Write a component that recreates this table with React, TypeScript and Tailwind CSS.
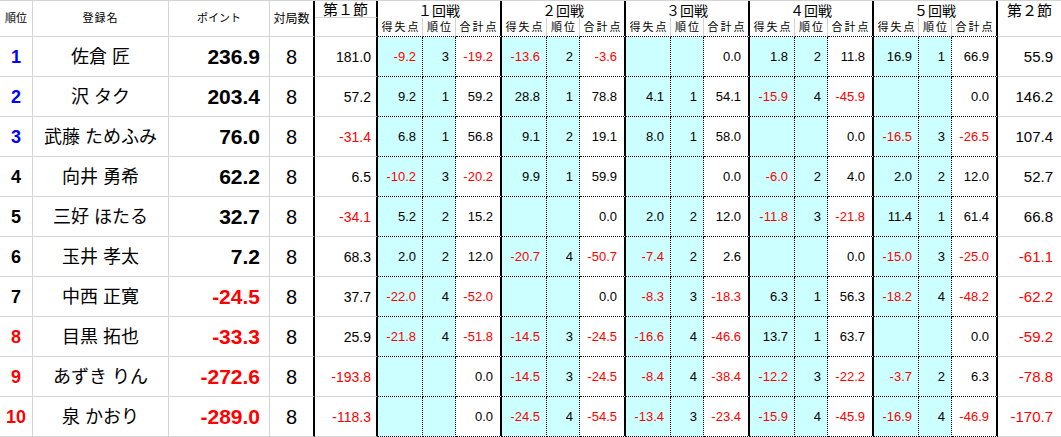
import React from "react";

type Round = [string, string, string];
type Row = {
  rank: number;
  name: string;
  pts: string;
  s1: string;
  rounds: Round[];
  s2: string;
};

const rows: Row[] = [
  { rank: 1, name: "佐倉 匠", pts: "236.9", s1: "181.0", rounds: [["-9.2", "3", "-19.2"], ["-13.6", "2", "-3.6"], ["", "", "0.0"], ["1.8", "2", "11.8"], ["16.9", "1", "66.9"]], s2: "55.9" },
  { rank: 2, name: "沢 タク", pts: "203.4", s1: "57.2", rounds: [["9.2", "1", "59.2"], ["28.8", "1", "78.8"], ["4.1", "1", "54.1"], ["-15.9", "4", "-45.9"], ["", "", "0.0"]], s2: "146.2" },
  { rank: 3, name: "武藤 ためふみ", pts: "76.0", s1: "-31.4", rounds: [["6.8", "1", "56.8"], ["9.1", "2", "19.1"], ["8.0", "1", "58.0"], ["", "", "0.0"], ["-16.5", "3", "-26.5"]], s2: "107.4" },
  { rank: 4, name: "向井 勇希", pts: "62.2", s1: "6.5", rounds: [["-10.2", "3", "-20.2"], ["9.9", "1", "59.9"], ["", "", "0.0"], ["-6.0", "2", "4.0"], ["2.0", "2", "12.0"]], s2: "52.7" },
  { rank: 5, name: "三好 ほたる", pts: "32.7", s1: "-34.1", rounds: [["5.2", "2", "15.2"], ["", "", "0.0"], ["2.0", "2", "12.0"], ["-11.8", "3", "-21.8"], ["11.4", "1", "61.4"]], s2: "66.8" },
  { rank: 6, name: "玉井 孝太", pts: "7.2", s1: "68.3", rounds: [["2.0", "2", "12.0"], ["-20.7", "4", "-50.7"], ["-7.4", "2", "2.6"], ["", "", "0.0"], ["-15.0", "3", "-25.0"]], s2: "-61.1" },
  { rank: 7, name: "中西 正寛", pts: "-24.5", s1: "37.7", rounds: [["-22.0", "4", "-52.0"], ["", "", "0.0"], ["-8.3", "3", "-18.3"], ["6.3", "1", "56.3"], ["-18.2", "4", "-48.2"]], s2: "-62.2" },
  { rank: 8, name: "目黒 拓也", pts: "-33.3", s1: "25.9", rounds: [["-21.8", "4", "-51.8"], ["-14.5", "3", "-24.5"], ["-16.6", "4", "-46.6"], ["13.7", "1", "63.7"], ["", "", "0.0"]], s2: "-59.2" },
  { rank: 9, name: "あずき りん", pts: "-272.6", s1: "-193.8", rounds: [["", "", "0.0"], ["-14.5", "3", "-24.5"], ["-8.4", "4", "-38.4"], ["-12.2", "3", "-22.2"], ["-3.7", "2", "6.3"]], s2: "-78.8" },
  { rank: 10, name: "泉 かおり", pts: "-289.0", s1: "-118.3", rounds: [["", "", "0.0"], ["-24.5", "4", "-54.5"], ["-13.4", "3", "-23.4"], ["-15.9", "4", "-45.9"], ["-16.9", "4", "-46.9"]], s2: "-170.7" },
];

const roundNames = ["１回戦", "２回戦", "３回戦", "４回戦", "５回戦"];

const neg = (v: string) => v.startsWith("-");

function rankColor(r: number) {
  if (r <= 3) return "text-[#0000ff]";
  if (r >= 8) return "text-[#ff0000]";
  return "text-black";
}

export default function App() {
  return (
    <div className="w-[1061px] h-[437px] overflow-hidden bg-white font-['Liberation_Sans','Noto_Sans_CJK_JP',sans-serif] text-black">
      <div className="grid grid-cols-[33px_136px_101px_45px_63px_repeat(5,45px_33px_46px)_63px] grid-rows-[17px_19px_repeat(10,40px)] border-t border-t-[#d4d4d4] leading-none">
        {/* Header row 1 */}
        <div className="row-span-2 flex items-center justify-center border-r border-b border-[#d4d4d4] text-[11px]">順位</div>
        <div className="row-span-2 flex items-center justify-center border-r border-b border-[#d4d4d4] text-[11px] tracking-[1px]">登録名</div>
        <div className="row-span-2 flex items-center justify-center border-r border-b border-[#d4d4d4] text-[11px]">ポイント</div>
        <div className="row-span-2 flex items-center justify-center border-b border-b-[#d4d4d4] border-r-2 border-r-black text-[12px]">対局数</div>
        <div className="flex items-center justify-center border-b border-b-[#d4d4d4] border-r-2 border-r-black text-[15px] pt-[1px]">第１節</div>
        {roundNames.map((n) => (
          <div key={n} className="col-span-3 flex items-center justify-center border-r-2 border-r-black text-[14px] pt-[2px]">{n}</div>
        ))}
        <div className="flex items-center justify-center text-[15px] pt-[2px]">第２節</div>

        {/* Header row 2 */}
        <div className="border-b border-b-[#d4d4d4] border-r-2 border-r-black"></div>
        {roundNames.map((n) => (
          <React.Fragment key={n + "s"}>
            <div className="flex items-center justify-center border-r border-r-[#d4d4d4] border-b border-b-black [border-bottom-style:dotted] text-[11px] tracking-[2px] pl-[2px]">得失点</div>
            <div className="flex items-center justify-center border-r border-r-[#d4d4d4] border-b border-b-black [border-bottom-style:dotted] text-[11px] tracking-[2px] pl-[2px]">順位</div>
            <div className="flex items-center justify-center border-r-2 border-r-black border-b border-b-black [border-bottom-style:dotted] text-[11px] tracking-[2px] pl-[2px]">合計点</div>
          </React.Fragment>
        ))}
        <div className="border-b border-b-[#d4d4d4]"></div>

        {/* Data rows */}
        {rows.map((r) => (
          <React.Fragment key={r.rank}>
            <div className={`flex items-center justify-center border-r border-b border-[#d4d4d4] text-[18px] font-bold ${rankColor(r.rank)}`}>{r.rank}</div>
            <div className="flex items-center justify-center border-r border-b border-[#d4d4d4] text-[18px]">{r.name}</div>
            <div className={`flex items-center justify-end pr-[9px] border-r border-b border-[#d4d4d4] text-[21px] font-bold ${neg(r.pts) ? "text-[#ff0000]" : "text-black"}`}>{r.pts}</div>
            <div className="flex items-center justify-center border-b border-b-[#d4d4d4] border-r-2 border-r-black text-[20px]">8</div>
            <div className={`flex items-center justify-end pr-[5px] border-b border-b-[#d4d4d4] border-r-2 border-r-black text-[14px] ${neg(r.s1) ? "text-[#ff0000]" : "text-black"}`}>{r.s1}</div>
            {r.rounds.map((rd, i) => (
              <React.Fragment key={i}>
                <div className={`flex items-center justify-end pr-[6px] bg-[#ccffff] border-r border-b border-black border-dotted text-[13px] ${neg(rd[0]) ? "text-[#ff0000]" : "text-black"}`}>{rd[0]}</div>
                <div className="flex items-center justify-end pr-[6px] bg-[#ccffff] border-r border-b border-black border-dotted text-[13px]">{rd[1]}</div>
                <div className={`flex items-center justify-end pr-[7px] border-r-2 border-r-black border-b border-b-black [border-bottom-style:dotted] text-[13px] ${neg(rd[2]) ? "text-[#ff0000]" : "text-black"}`}>{rd[2]}</div>
              </React.Fragment>
            ))}
            <div className={`flex items-center justify-end pr-[8px] border-b border-b-[#d4d4d4] text-[15px] ${neg(r.s2) ? "text-[#ff0000]" : "text-black"}`}>{r.s2}</div>
          </React.Fragment>
        ))}
      </div>
    </div>
  );
}
